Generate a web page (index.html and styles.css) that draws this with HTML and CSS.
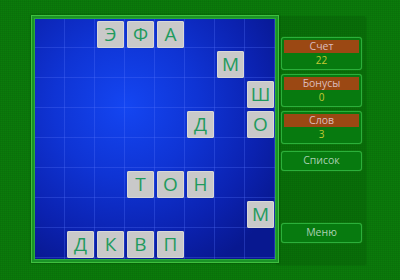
FILE: index.html
```html
<!DOCTYPE html>
<html lang="ru">
<head>
<meta charset="utf-8">
<link rel="stylesheet" href="styles.css">
</head>
<body>
<div class="screen">
  <div class="board">
    <div class="grid">
      <div class="tile" style="grid-column:3;grid-row:1">Э</div>
      <div class="tile" style="grid-column:4;grid-row:1">Ф</div>
      <div class="tile" style="grid-column:5;grid-row:1">А</div>
      <div class="tile" style="grid-column:7;grid-row:2">М</div>
      <div class="tile" style="grid-column:8;grid-row:3">Ш</div>
      <div class="tile" style="grid-column:6;grid-row:4">Д</div>
      <div class="tile" style="grid-column:8;grid-row:4">О</div>
      <div class="tile" style="grid-column:4;grid-row:6">Т</div>
      <div class="tile" style="grid-column:5;grid-row:6">О</div>
      <div class="tile" style="grid-column:6;grid-row:6">Н</div>
      <div class="tile" style="grid-column:8;grid-row:7">М</div>
      <div class="tile" style="grid-column:2;grid-row:8">Д</div>
      <div class="tile" style="grid-column:3;grid-row:8">К</div>
      <div class="tile" style="grid-column:4;grid-row:8">В</div>
      <div class="tile" style="grid-column:5;grid-row:8">П</div>
    </div>
  </div>
  <div class="panel">
    <div class="stat">
      <div class="stat-title">Счет</div>
      <div class="stat-value">22</div>
    </div>
    <div class="stat">
      <div class="stat-title">Бонусы</div>
      <div class="stat-value">0</div>
    </div>
    <div class="stat">
      <div class="stat-title">Слов</div>
      <div class="stat-value">3</div>
    </div>
    <div class="btn btn-list">Список</div>
    <div class="spacer"></div>
    <div class="btn">Меню</div>
  </div>
</div>
</body>
</html>
```

FILE: styles.css
```css
html, body {
  margin: 0;
  padding: 0;
}
body {
  width: 400px;
  height: 280px;
  overflow: hidden;
  background-color: #0b7c0b;
  background-image:
    repeating-linear-gradient(0deg, rgba(0,0,0,0.05) 0 1px, transparent 1px 2px),
    repeating-linear-gradient(90deg, rgba(0,0,0,0.05) 0 1px, transparent 1px 2px);
  font-family: "Open Sans", "Noto Sans", sans-serif;
}
.screen {
  display: flex;
  align-items: flex-start;
  padding: 15px 0 0 31px;
}
.board {
  position: relative;
  z-index: 1;
  border: 1px solid #3fc03f;
  background: #1a9426;
  padding: 3px;
  box-shadow: 0 0 2px rgba(0,0,0,0.4);
}
.grid {
  display: grid;
  grid-template-columns: repeat(8, 30px);
  grid-template-rows: repeat(8, 30px);
  width: 240px;
  height: 240px;
  border: 1px solid #2aa83a;
  margin: -1px;
  background-color: #0b24b4;
  background-image:
    linear-gradient(90deg, rgba(90,120,255,0.28) 1px, transparent 1px),
    linear-gradient(0deg, rgba(90,120,255,0.28) 1px, transparent 1px),
    radial-gradient(ellipse 75% 75% at 38% 36%, #1446f2 0%, #0f34d4 40%, #0b22b0 75%, #081890 100%);
  background-size: 30px 30px, 30px 30px, 100% 100%;
  background-position: -1px 0, 0 -1px, 0 0;
}
.tile {
  margin: 2px 1px 1px 2px;
  background: #c9c9c9;
  border-radius: 2px;
  box-shadow: inset 0 0 0 1px #d8d8d8, 0 0 1px rgba(0,0,0,0.4);
  color: #1f9b5e;
  font-size: 19px;
  line-height: 27px;
  text-align: center;
}
.panel {
  margin-left: -3px;
  margin-top: 1px;
  width: 89px;
  height: 248px;
  box-sizing: border-box;
  padding: 21px 3px 21px 5px;
  background: rgba(0,40,0,0.14);
  box-shadow: 1px 1px 2px rgba(0,0,0,0.15);
  display: flex;
  flex-direction: column;
  gap: 4px;
}
.stat {
  border: 1.5px solid #2bb03a;
  border-radius: 3px;
  padding: 1.5px 2px 0 2px;
  height: 33px;
  box-sizing: border-box;
  background: #077a0f;
  box-shadow: 0 0 1px rgba(120,255,120,0.5);
}
.stat-title {
  background: #9b4813;
  color: #dcbcbc;
  font-size: 10.5px;
  line-height: 13px;
  height: 13px;
  text-align: center;
}
.stat-value {
  color: #c4c834;
  font-size: 10px;
  line-height: 15px;
  text-align: center;
}
.btn {
  height: 20px;
  box-sizing: border-box;
  border: 1.5px solid #2bb03a;
  border-radius: 3px;
  color: #aacfb2;
  font-size: 10.5px;
  line-height: 17px;
  text-align: center;
  background: #077a0f;
  box-shadow: 0 0 1px rgba(120,255,120,0.5);
}
.btn-list {
  margin-top: 3px;
}
.spacer {
  flex: 1;
}
```
